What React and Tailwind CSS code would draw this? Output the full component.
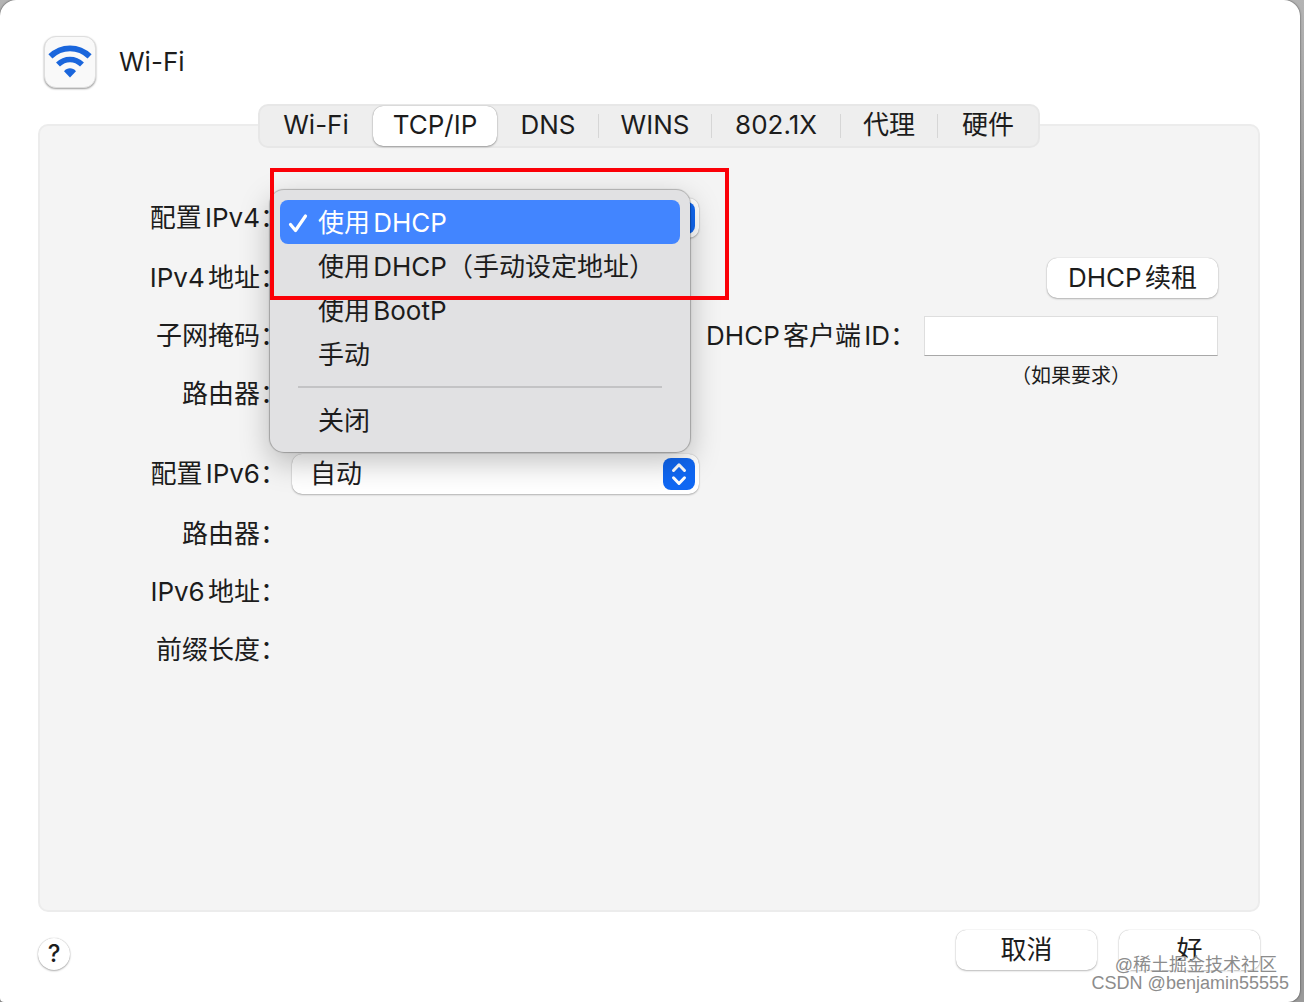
import React, { useState } from 'react';

const TABS = [
    { label: 'Wi-Fi', width: 'w-[112px]' },
    { label: 'TCP/IP', width: 'w-[124px]' },
    { label: 'DNS', width: 'w-[100px]' },
    { label: 'WINS', width: 'w-[112px]' },
    { label: '802.1X', width: 'w-[128px]' },
    { label: '代理', width: 'w-[96px]' },
    { label: '硬件', width: 'w-[100px]' }
];

const IPV4_OPTIONS = ['使用DHCP', '使用DHCP（手动设定地址）', '使用BootP', '手动'];

const WifiIcon = () => (
    <div className="flex size-[52px] items-center justify-center rounded-xl border border-[#dedede] bg-[#f9f9f9] shadow-[0_1px_2px_rgba(0,0,0,0.4)]">
        <svg viewBox="0 0 44 34" className="h-[34px] w-11" fill="none" aria-hidden="true">
            <path d="M2.4 11.4C13.5 0.6 30.5 0.6 41.6 11.4" stroke="#1a66dc" strokeWidth="5.8" />
            <path d="M10 19.6C17 12.8 27 12.8 34 19.6" stroke="#1a66dc" strokeWidth="5.6" />
            <path d="M16 26.2C19.4 22.4 24.6 22.4 28 26.2L22 32.4Z" fill="#1a66dc" />
        </svg>
    </div>
);

const StepperChip = () => (
    <svg viewBox="0 0 32 32" className="pointer-events-none absolute top-1 right-1 size-8" fill="none" aria-hidden="true">
        <rect width="32" height="32" rx="8" fill="#1068f4" />
        <path d="M10.5 12.5L16 6.8L21.5 12.5M10.5 19.8L16 25.5L21.5 19.8" stroke="white" strokeWidth="3" strokeLinecap="round" strokeLinejoin="round" />
    </svg>
);

const Select = ({ id, options, children }) => (
    <div className="relative w-[407px]">
        <select
            id={id}
            className="block h-10 w-full appearance-none rounded-[10px] bg-white pr-10 pl-[18px] shadow-[0_0_1px_rgba(0,0,0,0.3),0_1px_2px_rgba(0,0,0,0.25)] outline-none"
        >
            {options.map((option) => (
                <option key={option}>{option}</option>
            ))}
        </select>
        <StepperChip />
        {children}
    </div>
);

const MenuItem = ({ label, checked, onSelect }) => (
    <button
        role="menuitemradio"
        aria-checked={checked}
        onClick={onSelect}
        className={`flex h-11 w-full items-center rounded-lg pt-[2px] pl-2 text-left ${checked ? 'bg-[#4285ff] text-white' : ''}`}
    >
        <span className="w-[30px]">
            {checked && (
                <svg viewBox="0 0 20 20" className="size-5" fill="none" aria-hidden="true">
                    <path d="M2.5 11.5L7.5 17.5L17.5 3" stroke="white" strokeWidth="3.2" strokeLinecap="round" strokeLinejoin="round" />
                </svg>
            )}
        </span>
        {label}
    </button>
);

const Ipv4Menu = () => {
    const [selected, setSelected] = useState(IPV4_OPTIONS[0]);

    return (
        <div
            role="menu"
            className="absolute -top-2 -left-[22px] z-10 w-[420px] rounded-[14px] bg-[#e1e1e3] p-[10px] shadow-[0_0_1px_1px_rgba(0,0,0,0.25),0_10px_30px_rgba(0,0,0,0.25)]"
        >
            {IPV4_OPTIONS.map((option) => (
                <MenuItem key={option} label={option} checked={option === selected} onSelect={() => setSelected(option)} />
            ))}
            <hr className="mx-[18px] my-[10px] border-t-2 border-[#c3c3c5]" />
            <MenuItem label="关闭" checked={selected === '关闭'} onSelect={() => setSelected('关闭')} />
        </div>
    );
};

const Row = ({ label, htmlFor, children }) => (
    <div className={`flex items-center gap-[6px] ${children ? 'h-[62px]' : 'h-[58px]'}`}>
        <label htmlFor={htmlFor} className="w-[248px] text-right whitespace-nowrap">{label}</label>
        {children}
    </div>
);

const PushButton = ({ className, children }) => (
    <button className={`h-10 rounded-[10px] bg-white shadow-[0_0_1px_rgba(0,0,0,0.3),0_1px_2px_rgba(0,0,0,0.25)] ${className}`}>
        {children}
    </button>
);

const TabBar = ({ active, onChange }) => (
    <div
        role="tablist"
        className="relative z-10 mx-auto -mb-6 flex h-11 w-[782px] max-w-full items-center rounded-[10px] border-2 border-[#e7e7e7] bg-[#eeeeee]"
    >
        {TABS.map((tab, i) => (
            <React.Fragment key={tab.label}>
                {i > 0 && (
                    <span className={`h-6 w-px ${active === i || active === i - 1 ? 'bg-transparent' : 'bg-[#d6d6d6]'}`} />
                )}
                <button
                    role="tab"
                    aria-selected={active === i}
                    onClick={() => onChange(i)}
                    className={`h-10 rounded-[10px] pb-[2px] ${tab.width} ${active === i ? 'bg-white shadow-[0_0_1px_rgba(0,0,0,0.4),0_1px_2px_rgba(0,0,0,0.3)]' : ''}`}
                >
                    {tab.label}
                </button>
            </React.Fragment>
        ))}
    </div>
);

const App = () => {
    const [active, setActive] = useState(1);

    return (
        <div className="min-h-screen bg-linear-to-b from-[#b4b4b4] to-[#9a9a9a] to-20% pr-1">
            <main className="relative flex min-h-screen flex-col rounded-t-2xl rounded-br-xl rounded-bl-sm bg-white pt-9 pr-10 pb-8 pl-[38px] font-['Inter','Noto_Sans_CJK_SC',sans-serif] text-[26px] leading-9 text-[#1c1c1c] shadow-[0_0_2px_rgba(0,0,0,0.7)] [text-autospace:normal]">
                <header className="mb-4 flex items-center gap-[23px] pl-[6px]">
                    <WifiIcon />
                    <h1>Wi-Fi</h1>
                </header>

                <TabBar active={active} onChange={setActive} />

                <section className="flex flex-1 justify-between rounded-[10px] border-2 border-[#ececec] bg-[#f4f4f4] pt-[61px] pr-10">
                    <div className="-ml-[2px]">
                        <Row label="配置IPv4：" htmlFor="ipv4">
                            <Select id="ipv4" options={[...IPV4_OPTIONS, '关闭']}>
                                <Ipv4Menu />
                                {/* highlight around the two DHCP choices */}
                                <div className="pointer-events-none absolute -top-[30px] -left-[22px] z-20 h-[132px] w-[459px] border-4 border-[#fb0007]" />
                            </Select>
                        </Row>
                        <Row label="IPv4地址：" />
                        <Row label="子网掩码：" />
                        <Row label="路由器：" />
                        <div className="mt-5">
                            <Row label="配置IPv6：" htmlFor="ipv6">
                                <Select id="ipv6" options={['自动', '手动', '仅本地链接']} />
                            </Row>
                        </div>
                        <Row label="路由器：" />
                        <Row label="IPv6地址：" />
                        <Row label="前缀长度：" />
                    </div>

                    <div className="flex flex-col items-end pt-[62px]">
                        <div className="flex h-[58px] items-center">
                            <PushButton className="w-[171px]">DHCP续租</PushButton>
                        </div>
                        <div className="grid grid-cols-[auto_294px] items-center gap-x-2">
                            <label htmlFor="client-id" className="flex h-[58px] items-center whitespace-nowrap">DHCP客户端ID：</label>
                            <input
                                id="client-id"
                                type="text"
                                className="h-10 border border-[#dedede] border-b-[#a8a8a8] bg-white px-2 outline-none"
                            />
                            <p className="col-start-2 text-center text-[20px] leading-[22px]">（如果要求）</p>
                        </div>
                    </div>
                </section>

                <footer className="flex items-end gap-[22px] pt-[18px]">
                    <button
                        aria-label="帮助"
                        className="mr-auto size-8 rounded-full bg-white text-[24px] leading-8 font-medium shadow-[0_0_1px_rgba(0,0,0,0.3),0_1px_2px_rgba(0,0,0,0.3)]"
                    >
                        ?
                    </button>
                    <PushButton className="w-[141px]">取消</PushButton>
                    <PushButton className="w-[141px]">好</PushButton>
                </footer>

                <div className="pointer-events-none absolute right-[11px] bottom-[10px] text-right font-['Liberation_Sans','Noto_Sans_CJK_SC',sans-serif] text-[18px] leading-[18px] text-[#8c8c8c] [text-shadow:1px_1px_0_white]">
                    <p className="pr-3">@稀土掘金技术社区</p>
                    <p>CSDN @benjamin55555</p>
                </div>
            </main>
        </div>
    );
};

export default App;
